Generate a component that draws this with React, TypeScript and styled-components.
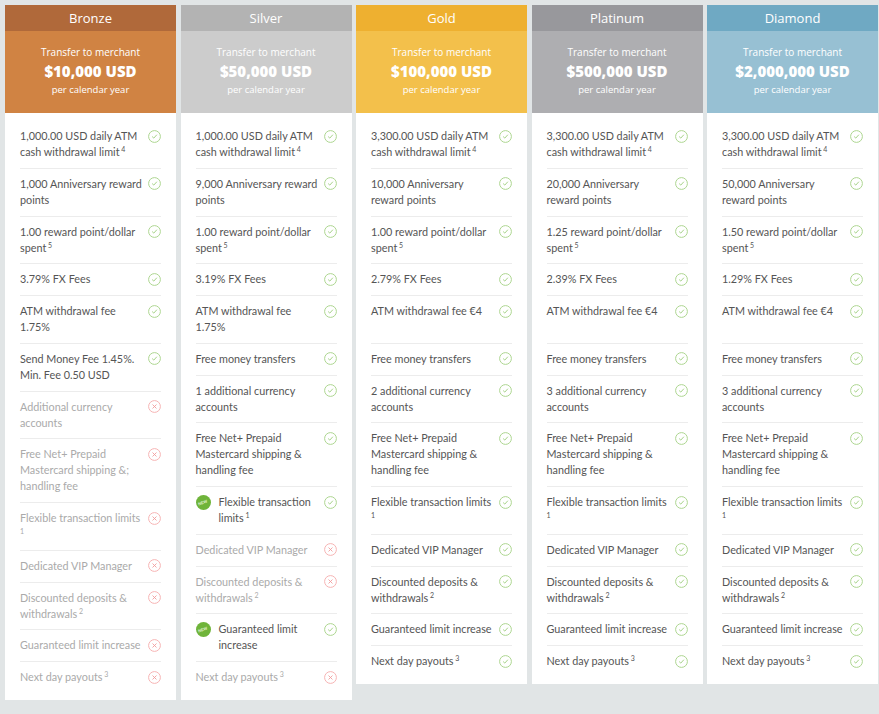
import styled, { createGlobalStyle } from 'styled-components'

type Feature = {
  lines: string[]
  sup?: string
  on: boolean
  isNew?: boolean
}

type Plan = {
  name: string
  amount: string
  titleBg: string
  priceBg: string
  features: Feature[]
}

const GlobalStyle = createGlobalStyle`
  html, body {
    margin: 0;
    padding: 0;
    background: #e1e5e6;
  }
  body {
    font-family: 'Lato', 'Open Sans', sans-serif;
  }
`

const f = (lines: string[], on: boolean, sup?: string, isNew?: boolean): Feature => ({
  lines,
  on,
  sup,
  isNew,
})

const plans: Plan[] = [
  {
    name: 'Bronze',
    amount: '$10,000 USD',
    titleBg: '#b0693a',
    priceBg: '#d08343',
    features: [
      f(['1,000.00 USD daily ATM', 'cash withdrawal limit'], true, '4'),
      f(['1,000 Anniversary reward', 'points'], true),
      f(['1.00 reward point/dollar', 'spent'], true, '5'),
      f(['3.79% FX Fees'], true),
      f(['ATM withdrawal fee', '1.75%'], true),
      f(['Send Money Fee 1.45%.', 'Min. Fee 0.50 USD'], true),
      f(['Additional currency', 'accounts'], false),
      f(['Free Net+ Prepaid', 'Mastercard shipping &;', 'handling fee'], false),
      f(['Flexible transaction limits', ''], false, '1'),
      f(['Dedicated VIP Manager'], false),
      f(['Discounted deposits &', 'withdrawals'], false, '2'),
      f(['Guaranteed limit increase'], false),
      f(['Next day payouts'], false, '3'),
    ],
  },
  {
    name: 'Silver',
    amount: '$50,000 USD',
    titleBg: '#b3b3b3',
    priceBg: '#cccccc',
    features: [
      f(['1,000.00 USD daily ATM', 'cash withdrawal limit'], true, '4'),
      f(['9,000 Anniversary reward', 'points'], true),
      f(['1.00 reward point/dollar', 'spent'], true, '5'),
      f(['3.19% FX Fees'], true),
      f(['ATM withdrawal fee', '1.75%'], true),
      f(['Free money transfers'], true),
      f(['1 additional currency', 'accounts'], true),
      f(['Free Net+ Prepaid', 'Mastercard shipping &', 'handling fee'], true),
      f(['Flexible transaction', 'limits'], true, '1', true),
      f(['Dedicated VIP Manager'], false),
      f(['Discounted deposits &', 'withdrawals'], false, '2'),
      f(['Guaranteed limit', 'increase'], true, undefined, true),
      f(['Next day payouts'], false, '3'),
    ],
  },
]

const topTier = (
  name: string,
  amount: string,
  titleBg: string,
  priceBg: string,
  reward: string,
  points: string,
  fx: string,
  currencies: string,
): Plan => ({
  name,
  amount,
  titleBg,
  priceBg,
  features: [
    f(['3,300.00 USD daily ATM', 'cash withdrawal limit'], true, '4'),
    f([`${reward} Anniversary`, 'reward points'], true),
    f([`${points} reward point/dollar`, 'spent'], true, '5'),
    f([`${fx} FX Fees`], true),
    f(['ATM withdrawal fee €4', '\u00a0'], true),
    f(['Free money transfers'], true),
    f([`${currencies} additional currency`, 'accounts'], true),
    f(['Free Net+ Prepaid', 'Mastercard shipping &', 'handling fee'], true),
    f(['Flexible transaction limits', ''], true, '1'),
    f(['Dedicated VIP Manager'], true),
    f(['Discounted deposits &', 'withdrawals'], true, '2'),
    f(['Guaranteed limit increase'], true),
    f(['Next day payouts'], true, '3'),
  ],
})

plans.push(
  topTier('Gold', '$100,000 USD', '#eeb030', '#f3c04b', '10,000', '1.00', '2.79%', '2'),
  topTier('Platinum', '$500,000 USD', '#98989c', '#aeaeb1', '20,000', '1.25', '2.39%', '3'),
  topTier('Diamond', '$2,000,000 USD', '#6fa9c3', '#97c0d3', '50,000', '1.50', '1.29%', '3'),
)

function CheckIcon() {
  return (
    <svg width="13" height="13" viewBox="0 0 13 13" fill="none">
      <circle cx="6.5" cy="6.5" r="5.9" stroke="#add690" strokeWidth="1" />
      <path d="M4.4 6.8 L5.8 8.1 L8.6 5" stroke="#9ccd7c" strokeWidth="0.9" strokeLinecap="round" strokeLinejoin="round" />
    </svg>
  )
}

function CrossIcon() {
  return (
    <svg width="13" height="13" viewBox="0 0 13 13" fill="none">
      <circle cx="6.5" cy="6.5" r="5.9" stroke="#f6b4b4" strokeWidth="1" />
      <path d="M4.8 4.8 L8.2 8.2 M8.2 4.8 L4.8 8.2" stroke="#f29c9c" strokeWidth="0.9" strokeLinecap="round" />
    </svg>
  )
}

export default function App() {
  return (
    <>
      <GlobalStyle />
      <Board>
        {plans.map((plan) => (
          <Card key={plan.name}>
            <Title $bg={plan.titleBg}>{plan.name}</Title>
            <Price $bg={plan.priceBg}>
              <PriceLabel>Transfer to merchant</PriceLabel>
              <Amount>{plan.amount}</Amount>
              <PriceNote>per calendar year</PriceNote>
            </Price>
            <FeatureList>
              {plan.features.map((feat, i) => (
                <Row key={i}>
                  {feat.isNew && (
                    <NewBadge>
                      <span>NEW</span>
                    </NewBadge>
                  )}
                  <Label $on={feat.on}>
                    {feat.lines.map((line, j) => (
                      <Line key={j}>
                        {line}
                        {j === feat.lines.length - 1 && feat.sup && (
                          <Sup>
                            {line ? ' ' : ''}
                            {feat.sup}
                          </Sup>
                        )}
                      </Line>
                    ))}
                  </Label>
                  <IconSlot>{feat.on ? <CheckIcon /> : <CrossIcon />}</IconSlot>
                </Row>
              ))}
            </FeatureList>
          </Card>
        ))}
      </Board>
    </>
  )
}

const Board = styled.div`
  display: grid;
  grid-template-columns: repeat(5, 171px);
  column-gap: 4.5px;
  align-items: start;
  padding: 5px 0 0 5px;
`

const Card = styled.section`
  background: #ffffff;
  padding-bottom: 7px;
`

const Title = styled.div<{ $bg: string }>`
  height: 26px;
  display: flex;
  align-items: center;
  justify-content: center;
  background: ${({ $bg }) => $bg};
  color: #ffffff;
  font-family: 'Open Sans', sans-serif;
  font-size: 13px;
`

const Price = styled.div<{ $bg: string }>`
  height: 82px;
  display: flex;
  flex-direction: column;
  align-items: center;
  justify-content: center;
  background: ${({ $bg }) => $bg};
  color: #ffffff;
  font-family: 'Open Sans', sans-serif;
`

const PriceLabel = styled.div`
  font-size: 10px;
  line-height: 14px;
  margin-top: -2px;
`

const Amount = styled.div`
  font-size: 15px;
  font-weight: 800;
  line-height: 24px;
`

const PriceNote = styled.div`
  font-size: 9.5px;
  line-height: 14px;
`

const FeatureList = styled.ul`
  list-style: none;
  margin: 0;
  padding: 8px 15px 0;
`

const Row = styled.li`
  display: flex;
  align-items: flex-start;
  padding: 7px 0 7.75px;
  border-bottom: 1px solid #ececec;

  &:last-child {
    border-bottom: none;
  }
`

const Label = styled.div<{ $on: boolean }>`
  flex: 1;
  font-size: 10.8px;
  line-height: 16px;
  color: ${({ $on }) => ($on ? '#555555' : '#aaaaaa')};
`

const Line = styled.div`
  white-space: nowrap;
  min-height: 16px;
`

const Sup = styled.sup`
  font-size: 7px;
  vertical-align: 4px;
  line-height: 0;
`

const IconSlot = styled.span`
  display: flex;
  padding-top: 1.5px;
  flex-shrink: 0;
`

const NewBadge = styled.span`
  width: 15px;
  height: 15px;
  border-radius: 50%;
  background: #6fb43a;
  display: flex;
  align-items: center;
  justify-content: center;
  margin: 1px 8px 0 0;
  flex-shrink: 0;

  span {
    font-family: 'Liberation Sans', sans-serif;
    font-size: 4px;
    font-weight: 700;
    color: #e4f3d6;
    transform: rotate(-20deg);
  }
`
